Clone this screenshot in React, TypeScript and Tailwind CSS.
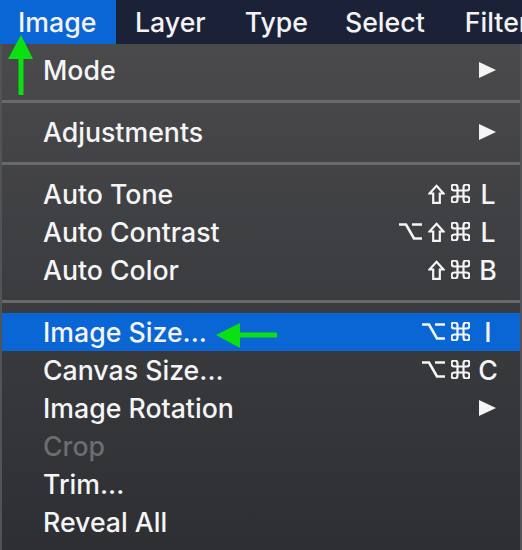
import React from "react";

const font = { fontFamily: 'Inter, "DejaVu Sans", sans-serif' };

function Tri() {
  return (
    <svg width="18" height="16" viewBox="0 0 18 16" className="mr-[3px] block">
      <polygon points="0,0 17,8 0,16" fill="#f4f4f4" />
    </svg>
  );
}

function Shift() {
  return (
    <svg width="17" height="20" viewBox="0 0 17 20" className="block">
      <polygon
        points="8.5,1.8 15.5,9.5 11.8,9.5 11.8,18.8 5.2,18.8 5.2,9.5 1.5,9.5"
        fill="none"
        stroke="#f5f5f5"
        strokeWidth="2.2"
        strokeLinejoin="miter"
      />
    </svg>
  );
}

function Cmd() {
  return (
    <svg width="19" height="19" viewBox="2.5 2.5 19 19" className="block">
      <path
        d="M15 6v12a3 3 0 1 0 3-3H6a3 3 0 1 0 3 3V6a3 3 0 1 0-3 3h12a3 3 0 1 0-3-3"
        fill="none"
        stroke="#f5f5f5"
        strokeWidth="2.2"
      />
    </svg>
  );
}

function Opt() {
  return (
    <svg width="23" height="19" viewBox="0 0 23 19" className="block">
      <path d="M0 2.5H7L15 16.5H23M13 2.5H23" fill="none" stroke="#f5f5f5" strokeWidth="2.6" />
    </svg>
  );
}

function Sc({ keys, letter }: { keys: React.ReactNode[]; letter: string }) {
  return (
    <span className="flex items-center">
      <span className="flex items-center gap-[6px]">
        {keys.map((k, i) => (
          <span key={i} className="block">
            {k}
          </span>
        ))}
      </span>
      <span className="ml-[6px] w-[24px] text-center leading-none">{letter}</span>
    </span>
  );
}

type Item = { label: string; right?: React.ReactNode; disabled?: boolean; active?: boolean };

function Row({ label, right, disabled, active }: Item) {
  return (
    <div
      className={`flex h-[38px] items-center justify-between pl-[41px] pr-[20px] ${
        active ? "bg-[#0b66d5]" : ""
      }`}
    >
      <span className={disabled ? "text-[#6c6d71]" : "text-[#f5f5f5]"}>{label}</span>
      {right && <span className="flex items-center text-[#f5f5f5]">{right}</span>}
    </div>
  );
}

function Sep() {
  return (
    <div className="flex h-[24px] flex-col pt-[11px]">
      <div className="h-[3px] bg-[#69696c]" />
    </div>
  );
}

export default function App() {
  return (
    <div className="relative h-[550px] w-[522px] overflow-hidden text-[26.7px] font-medium leading-none" style={font}>
      <div className="flex h-[44px] items-center whitespace-nowrap bg-[#1b2238] text-[#f3f3f3]">
        <div className="flex h-full w-[116px] shrink-0 items-center bg-[#0b66d5] pl-[18px]">Image</div>
        <div className="pl-[19px]">Layer</div>
        <div className="pl-[39px]">Type</div>
        <div className="pl-[37px]">Select</div>
        <div className="pl-[40px]">Filter</div>
      </div>
      <div className="flex h-[506px] flex-col border-l-2 border-r-2 border-[#525356] bg-gradient-to-b from-[#4a4a4d] via-[#3b3c3f] to-[#2e2f33] pt-[7px]">
        <Row label="Mode" right={<Tri />} />
        <Sep />
        <Row label="Adjustments" right={<Tri />} />
        <Sep />
        <Row label="Auto Tone" right={<Sc keys={[<Shift />, <Cmd />]} letter="L" />} />
        <Row label="Auto Contrast" right={<Sc keys={[<Opt />, <Shift />, <Cmd />]} letter="L" />} />
        <Row label="Auto Color" right={<Sc keys={[<Shift />, <Cmd />]} letter="B" />} />
        <Sep />
        <Row label="Image Size..." active right={<Sc keys={[<Opt />, <Cmd />]} letter="I" />} />
        <Row label="Canvas Size..." right={<Sc keys={[<Opt />, <Cmd />]} letter="C" />} />
        <Row label="Image Rotation" right={<Tri />} />
        <Row label="Crop" disabled />
        <Row label="Trim..." />
        <Row label="Reveal All" />
      </div>
      <svg className="absolute left-0 top-0" width="522" height="550" viewBox="0 0 522 550">
        <polygon points="21,35 33,59 23.5,59 23.5,95 18.5,95 18.5,59 8,59" fill="#0be012" />
        <polygon points="216,335 240,323 240,332.5 277,332.5 277,337.5 240,337.5 240,348" fill="#0be012" />
      </svg>
    </div>
  );
}
